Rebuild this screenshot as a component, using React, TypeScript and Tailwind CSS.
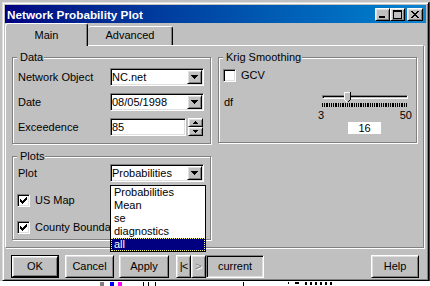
import { JSX, ReactNode } from 'react';

const raised =
  'border border-t-white border-l-white border-r-black border-b-black shadow-[inset_1px_1px_0_#dfdfdf,inset_-1px_-1px_0_#808080]';
const sunken =
  'border border-t-[#808080] border-l-[#808080] border-r-white border-b-white shadow-[inset_1px_1px_0_black,inset_-1px_-1px_0_#dfdfdf]';

const tickXs = Array.from({ length: 48 }, (_, i) => Math.round((i * 84) / 47) + 0.5);

const DownArrow = (): JSX.Element => (
  <svg width="7" height="4" shapeRendering="crispEdges">
    <path d="M0 0h7v1H0z M1 1h5v1H1z M2 2h3v1H2z M3 3h1v1H3z" fill="black" />
  </svg>
);

const Checkbox = ({ checked }: { checked?: boolean }): JSX.Element => (
  <div className={`flex h-[13px] w-[13px] shrink-0 items-center justify-center bg-white ${sunken}`}>
    {checked && (
      <svg width="7" height="7" shapeRendering="crispEdges">
        <path
          d="M6 0h1v1h-1z M5 1h2v1h-2z M0 2h1v1h-1z M4 2h3v1h-3z M0 3h2v1h-2z M3 3h3v1h-3z M0 4h5v1h-5z M1 5h3v1h-3z M2 6h1v1h-1z"
          fill="black"
        />
      </svg>
    )}
  </div>
);

const Combo = ({ value }: { value: string }): JSX.Element => (
  <div className={`flex h-[18px] w-[94px] items-center bg-white ${sunken}`}>
    <span className="flex-1 pl-[1px]">{value}</span>
    <div className={`mr-[1px] flex h-[14px] w-[15px] items-center justify-center bg-[#c0c0c0] ${raised}`}>
      <DownArrow />
    </div>
  </div>
);

const Spin = ({ value }: { value: string }): JSX.Element => (
  <div className="flex items-center">
    <div className={`flex h-[18px] w-[76px] items-center bg-white pl-[1px] ${sunken}`}>{value}</div>
    <div className="ml-[2px] flex h-[18px] w-[15px] flex-col">
      <div className={`flex h-[9px] items-center justify-center bg-[#c0c0c0] ${raised}`}>
        <svg width="5" height="3" shapeRendering="crispEdges">
          <path d="M2 0h1v1H2z M1 1h3v1H1z M0 2h5v1H0z" fill="black" />
        </svg>
      </div>
      <div className={`flex h-[9px] items-center justify-center bg-[#c0c0c0] ${raised}`}>
        <svg width="5" height="3" shapeRendering="crispEdges">
          <path d="M0 0h5v1H0z M1 1h3v1H1z M2 2h1v1H2z" fill="black" />
        </svg>
      </div>
    </div>
  </div>
);

const Group = ({ label, className, children }: { label: string; className: string; children: ReactNode }): JSX.Element => (
  <div className={`relative border border-[#808080] shadow-[inset_1px_1px_0_white,1px_1px_0_white] ${className}`}>
    <span className="absolute -top-[7px] left-[4px] bg-[#c0c0c0] pl-[3px] pr-[1px] leading-[13px]">{label}</span>
    {children}
  </div>
);

const Row = ({ label, children }: { label: string; children: ReactNode }): JSX.Element => (
  <div className="flex h-[18px] items-center">
    <span className="w-[92px]">{label}</span>
    {children}
  </div>
);

const Button = ({ label, className }: { label: ReactNode; className: string }): JSX.Element => (
  <div className={`flex h-[23px] items-center justify-center bg-[#c0c0c0] ${raised} ${className}`}>{label}</div>
);

const Slider = (): JSX.Element => (
  <div className="flex w-[86px] flex-col">
    <div className="relative h-[11px]">
      <div className="mt-[3px] h-[4px] border border-t-[#808080] border-l-[#808080] border-r-white border-b-white shadow-[inset_1px_1px_0_black]" />
      <svg className="absolute left-[22px] top-0" width="7" height="11" shapeRendering="crispEdges">
        <path d="M0 0H7V7L3.5 10.5L0 7Z" fill="#c0c0c0" />
        <path d="M0.5 7.5V0.5H6" stroke="white" fill="none" />
        <path d="M6.5 0V7.5L3.5 10.5" stroke="black" fill="none" />
        <path d="M0.5 7.5L3.5 10.5" stroke="white" fill="none" />
      </svg>
    </div>
    <svg width="86" height="4" shapeRendering="crispEdges">
      <path d={tickXs.map((x) => `M${x} 0V4`).join('')} stroke="black" strokeWidth="1" />
    </svg>
    <div className="-ml-[4px] -mr-[4px] mt-[2px] flex h-[12px] justify-between leading-[12px]">
      <span>3</span>
      <span>50</span>
    </div>
    <div className="ml-[26px] mt-[1px] h-[12px] w-[33px] bg-white text-center leading-[12px]">16</div>
  </div>
);

const PlotList = (): JSX.Element => (
  <div className="absolute left-0 top-[21px] z-10 w-[96px] border border-black bg-white">
    {['Probabilities', 'Mean', 'se', 'diagnostics'].map((item) => (
      <div key={item} className="h-[13px] pl-[3px] leading-[13px]">
        {item}
      </div>
    ))}
    <div className="h-[13px] border border-dotted border-[#ffff80] bg-[#000080] pl-[2px] leading-[11px] text-white">all</div>
  </div>
);

const TitleBar = (): JSX.Element => (
  <div className="flex h-[18px] items-center justify-between bg-linear-to-r from-[#000080] to-[#1084d0] pl-[2px] pr-[3px]">
    <span className="text-[11.75px] font-bold text-white">Network Probability Plot</span>
    <div className="flex items-center">
      <div className={`relative h-[13px] w-[15px] bg-[#c0c0c0] ${raised}`}>
        <svg className="absolute left-[3px] top-[7px]" width="6" height="2">
          <rect width="6" height="2" fill="black" />
        </svg>
      </div>
      <div className={`relative h-[13px] w-[15px] bg-[#c0c0c0] ${raised}`}>
        <svg className="absolute left-[2px] top-[1px]" width="9" height="9" shapeRendering="crispEdges">
          <path d="M0 0h9v2H0z M0 2h1v7H0z M8 2h1v7H8z M0 8h9v1H0z" fill="black" />
        </svg>
      </div>
      <div className={`relative ml-[2px] h-[13px] w-[16px] bg-[#c0c0c0] ${raised}`}>
        <svg className="absolute left-[3px] top-[2px]" width="8" height="7" shapeRendering="crispEdges">
          <path
            d="M0 0h2v1H0z M6 0h2v1H6z M1 1h2v1H1z M5 1h2v1H5z M2 2h4v1H2z M3 3h2v1H3z M2 4h4v1H2z M1 5h2v1H1z M5 5h2v1H5z M0 6h2v1H0z M6 6h2v1H6z"
            fill="black"
          />
        </svg>
      </div>
    </div>
  </div>
);

/**
 * Network Probability Plot dialog, Windows 95 look.
 */
export const App = (): JSX.Element => {
  return (
    <div className="h-[286px] w-[430px] overflow-hidden bg-white font-['Liberation_Sans',Arial,sans-serif] text-[11px] leading-[13px] text-black">
      <div className="h-[2px] bg-[#c0c0c0]" />
      <div className="flex">
        <div className="w-[2px] bg-[#c0c0c0]" />
        <div className="flex h-[279px] w-[427px] flex-col border border-t-[#dfdfdf] border-l-[#dfdfdf] border-r-black border-b-black bg-[#c0c0c0] p-[2px] shadow-[inset_1px_1px_0_white,inset_-1px_-1px_0_#808080]">
          <TitleBar />

          {/* tabs */}
          <div className="flex h-[22px] items-end">
            <div className="relative z-10 -mb-[1px] flex h-[23px] w-[83px] items-center justify-center rounded-t-[3px] border-l border-r border-t border-l-white border-r-black border-t-white bg-[#c0c0c0] shadow-[inset_-1px_0_0_#808080]">
              Main
            </div>
            <div className="flex h-[19px] w-[85px] items-center justify-center rounded-t-[3px] border-r border-t border-r-black border-t-white bg-[#c0c0c0] pb-[1px] shadow-[inset_-1px_0_0_#808080]">
              Advanced
            </div>
          </div>

          {/* panel */}
          <div className="flex h-[203px] w-[419px] border border-t-white border-l-white border-r-[#808080] border-b-[#808080] shadow-[1px_1px_0_white]">
            <div className="ml-[6px] mt-[11px] flex flex-col gap-[12px]">
              <Group label="Data" className="h-[87px] w-[199px]">
                <div className="flex flex-col gap-[7px] pl-[5px] pt-[10px]">
                  <Row label="Network Object">
                    <Combo value="NC.net" />
                  </Row>
                  <Row label="Date">
                    <Combo value="08/05/1998" />
                  </Row>
                  <Row label="Exceedence">
                    <Spin value="85" />
                  </Row>
                </div>
              </Group>

              <Group label="Plots" className="h-[84px] w-[199px]">
                <div className="flex items-center pl-[5px] pt-[7px]">
                  <span className="w-[92px]">Plot</span>
                  <div className="relative">
                    <Combo value="Probabilities" />
                    <PlotList />
                  </div>
                </div>
                <div className="mt-[12px] flex flex-col gap-[14px] pl-[4px]">
                  <div className="flex items-center">
                    <Checkbox checked />
                    <span className="ml-[5px] whitespace-nowrap">US Map</span>
                  </div>
                  <div className="flex items-center">
                    <Checkbox checked />
                    {/* the open list covers the end of this label */}
                    <span className="ml-[5px] w-[75px] overflow-hidden whitespace-nowrap">County Boundaries</span>
                  </div>
                </div>
              </Group>
            </div>

            <div className="ml-[7px] mt-[11px]">
              <Group label="Krig Smoothing" className="h-[86px] w-[199px]">
                <div className="flex items-center pl-[4px] pt-[11px]">
                  <Checkbox />
                  <span className="ml-[5px]">GCV</span>
                </div>
                <div className="mt-[10px] flex pl-[5px]">
                  <span className="mt-[4px] w-[98px]">df</span>
                  <Slider />
                </div>
              </Group>
            </div>
          </div>

          {/* buttons */}
          <div className="mt-[7px] flex items-center pl-[6px] pr-[7px]">
            <div className="h-[23px] w-[48px] border border-black">
              <div className="flex h-full items-center justify-center border border-t-white border-l-white border-r-black border-b-black bg-[#c0c0c0] shadow-[inset_1px_1px_0_#dfdfdf,inset_-1px_-1px_0_#808080]">
                OK
              </div>
            </div>
            <Button label="Cancel" className="ml-[6px] w-[49px]" />
            <Button label="Apply" className="ml-[5px] w-[50px]" />
            <Button label={<span className="tracking-[-1px]">|&lt;</span>} className="ml-[7px] w-[15px]" />
            <Button
              label={<span className="text-[#808080] [text-shadow:1px_1px_0_white]">&gt;</span>}
              className="w-[15px]"
            />
            <div className={`flex h-[23px] w-[58px] items-center justify-center bg-[#c0c0c0] ${sunken}`}>current</div>
            <Button label="Help" className="ml-auto w-[48px]" />
          </div>
        </div>
        <div className="w-[1px] bg-[#404040]" />
      </div>

      {/* edge of the window behind */}
      <div className="flex h-[5px] items-start overflow-hidden pt-[1px]">
        <div className="ml-[100px] h-[4px] w-[4px] bg-[#808080]" />
        <div className="ml-[6px] h-[4px] w-[4px] bg-[#0000ff]" />
        <div className="ml-[4px] h-[4px] w-[4px] bg-[#ff00ff]" />
        <div className="ml-[21px] h-[4px] w-[1px] bg-black" />
        <div className="ml-[4px] h-[4px] w-[1px] bg-black" />
        <div className="ml-[6px] h-[4px] w-[1px] bg-black" />
        <div className="ml-[87px] h-[4px] w-[1px] bg-black" />
        <div className="ml-[44px] h-[2px] w-[1px] bg-black" />
        <div className="ml-[6px] h-[2px] w-[4px] bg-black" />
        <div className="ml-[6px] h-[3px] w-[28px] bg-[repeating-linear-gradient(90deg,black_0_2px,transparent_2px_5px)]" />
      </div>
    </div>
  );
};

export default App;
